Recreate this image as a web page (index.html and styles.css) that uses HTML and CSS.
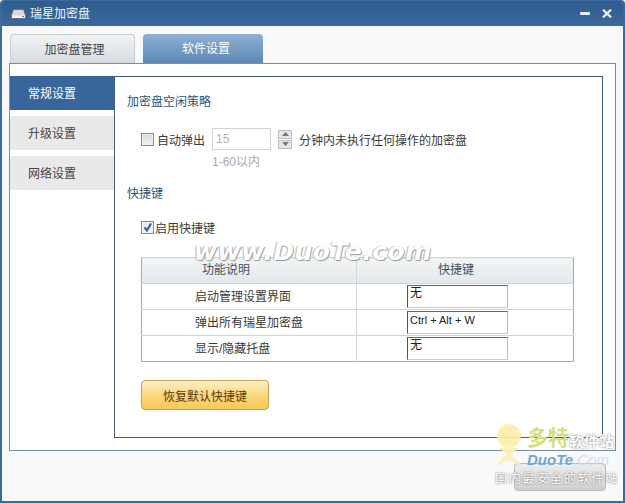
FILE: index.html
```html
<!DOCTYPE html>
<html lang="zh">
<head>
<meta charset="utf-8">
<title>瑞星加密盘</title>
<link rel="stylesheet" href="styles.css">
</head>
<body>
<div class="window">
  <header class="titlebar">
    <svg class="app-icon" width="15" height="10" viewBox="0 0 15 10"><path d="M2.500 .5h10L14.500 6v3.500H.5V6z" fill="#d8d8d8" stroke="#555" stroke-width=".6"/><rect x="1" y="6.500" width="13" height="2.500" fill="#f4f4f4"/><rect x="11" y="7" width="2" height="1" fill="#7a7a7a"/></svg>
    <span class="title">瑞星加密盘</span>
    <span class="win-btns">
      <svg width="10" height="5" viewBox="0 0 10 5"><rect y="1" width="10" height="3" rx="1" fill="#e8edf3"/></svg>
      <svg width="10" height="9" viewBox="0 0 10 9"><path d="M1 .7 9 8.300M9 .7 1 8.300" stroke="#eef2f6" stroke-width="2.200"/></svg>
    </span>
  </header>
  <div class="body">
    <nav class="tabs">
      <div class="tab tab-off">加密盘管理</div>
      <div class="tab tab-on">软件设置</div>
    </nav>
    <section class="panel">
      <aside class="side">
        <div class="side-item side-on">常规设置</div>
        <div class="side-item">升级设置</div>
        <div class="side-item">网络设置</div>
      </aside>
      <main class="content">
        <h2 class="heading">加密盘空闲策略</h2>
        <div class="idle-row">
          <span class="check"></span>
          <span class="check-label">自动弹出</span>
          <span class="num-input">15</span>
          <span class="spin">
            <span class="spin-btn"><svg width="7" height="4" viewBox="0 0 7 4"><path d="M3.500 0 7 4H0z" fill="#777"/></svg></span>
            <span class="spin-btn"><svg width="7" height="4" viewBox="0 0 7 4"><path d="M3.500 4 7 0H0z" fill="#777"/></svg></span>
          </span>
          <span class="idle-text">分钟内未执行任何操作的加密盘</span>
        </div>
        <div class="hint">1-60以内</div>
        <h2 class="heading heading-keys">快捷键</h2>
        <div class="enable-row">
          <span class="check check-on"><svg width="11" height="11" viewBox="0 0 11 11"><path d="M2.500 5.500 5 8.500 9 1.500" fill="none" stroke="#2f5f95" stroke-width="2"/></svg></span>
          <span class="enable-label">启用快捷键</span>
        </div>
        <table class="keys">
          <thead>
            <tr><th class="col-a">功能说明</th><th class="col-b">快捷键</th></tr>
          </thead>
          <tbody>
            <tr><td class="col-a">启动管理设置界面</td><td class="col-b"><span class="key-input">无</span></td></tr>
            <tr><td class="col-a">弹出所有瑞星加密盘</td><td class="col-b"><span class="key-input key-latin">Ctrl + Alt + W</span></td></tr>
            <tr><td class="col-a">显示/隐藏托盘</td><td class="col-b"><span class="key-input">无</span></td></tr>
          </tbody>
        </table>
        <button class="restore" type="button">恢复默认快捷键</button>
      </main>
    </section>
    <div class="footer"><button class="close-btn" type="button"></button></div>
  </div>
  <div class="wm-url">www.DuoTe.com</div>
  <div class="wm-logo">
    <svg class="wm-man" width="34" height="46" viewBox="0 0 34 46"><circle cx="17" cy="12" r="12" fill="#fdeeaa"/><path d="M3 42 15 30 7 24h20l-8 6 12 12-14-6z" fill="#fdf0b4"/></svg>
    <span class="wm-dt">多特</span><span class="wm-soft">软件站</span>
    <span class="wm-en">DuoTe<i class="wm-com">.Com</i></span>
    <span class="wm-cn">国内最安全的软件站</span>
  </div>
</div>
</body>
</html>
```
FILE: styles.css
```css
* { box-sizing: border-box; }
html, body { margin: 0; padding: 0; }
body { width: 625px; height: 503px; overflow: hidden; font-family: "Liberation Sans", "Noto Sans CJK SC", sans-serif; font-size: 12px; color: #3a3a3a; }
.window { position: relative; width: 625px; height: 503px; display: flex; flex-direction: column; background: #f9f9fb; border: 1px solid #3c6a9c; border-width: 1px 2px 2px 2px; border-radius: 4px 4px 0 0; overflow: hidden; }
.titlebar { flex: none; height: 25px; display: flex; align-items: center; padding: 0 11px 0 9px; background: linear-gradient(#2f5b8c, #3b6a9f); color: #f0f4f8; }
.app-icon { margin-top: 1px; }
.title { margin-left: 4px; padding-top: 2px; line-height: 23px; }
.win-btns { margin-left: auto; display: flex; align-items: center; gap: 12px; }
.body { flex: 1; display: flex; flex-direction: column; padding: 8px 7px 0; min-height: 0; }
.tabs { display: flex; gap: 8px; height: 29px; padding-left: 1px; }
.tab { height: 29px; border-radius: 4px 4px 0 0; text-align: center; line-height: 29px; padding-top: 1px; font-size: 12px; }
.tab-off { width: 125px; padding-left: 4px; background: linear-gradient(#f2f4f6, #d6dadf); border: 1px solid #c8cdd2; border-bottom: 0; color: #444; }
.tab-on { width: 120px; padding-left: 6px; background: linear-gradient(#8eb0d3, #5d88b5); color: #fff; }
.panel { flex: none; height: 388px; display: flex; padding: 12px 12px 12px 0; background: #fff; border: 1px solid #748fa3; }
.side { flex: none; width: 104px; display: flex; flex-direction: column; gap: 6px; }
.side-item { height: 34px; line-height: 34px; padding: 1px 0 0 18px; background: #e9e9e9; color: #444; }
.side-on { background: #38669b; color: #fff; }
.content { flex: 1; min-width: 0; padding-left: 12px; border: 1px solid #3d5f7f; background: #fff; }
.heading { margin: 16px 0 0; height: 18px; line-height: 18px; font-size: 12px; font-weight: 400; color: #2f5370; }
.heading-keys { margin-top: 15px; }
.idle-row { display: flex; align-items: center; height: 22px; margin-top: 17px; padding-left: 14px; }
.check { flex: none; width: 13px; height: 13px; display: flex; align-items: center; justify-content: center; background: linear-gradient(#d8d8d8, #f2f2f2); border: 1px solid #8b8b8b; box-shadow: inset 0 0 0 1px #eee; }
.check-on { background: linear-gradient(#dfe6ee, #f5f7fa); border-color: #7d8ea3; }
.check-label { margin-left: 3px; width: 55px; }
.num-input { width: 59px; height: 22px; line-height: 20px; padding-left: 3px; border: 1px solid #d4d4d4; color: #b4b4b4; background: #fff; }
.spin { margin-left: 7px; width: 14px; height: 19px; display: flex; flex-direction: column; gap: 1px; }
.spin-btn { flex: 1; display: flex; align-items: center; justify-content: center; background: #e6e6e6; border: 1px solid #bdbdbd; }
.idle-text { margin-left: 7px; }
.hint { height: 16px; line-height: 16px; margin: 4px 0 0 85px; color: #a9a9a9; }
.enable-row { display: flex; align-items: center; height: 18px; margin-top: 15px; padding-left: 14px; }
.enable-label { margin-left: 1px; }
.keys { width: 433px; margin: 21px 0 0 14px; border-collapse: collapse; table-layout: fixed; border: 1px solid #a9a9a9; }
.keys th, .keys td { padding: 0; border-top: 1px solid #d4d4d4; font-weight: 400; }
.keys th { height: 26px; padding-bottom: 4px; background: linear-gradient(#f3f5f6, #e2e7ea); text-align: left; color: #44525e; }
.keys td { height: 26px; }
.col-a { width: 215px; padding-left: 53px !important; border-right: 1px solid #d8d8d8; }
.keys td.col-a { padding-bottom: 3px; }
.keys th.col-a { padding-left: 60px !important; }
.col-b { padding-left: 50px !important; }
.keys th.col-b { padding-left: 81px !important; }
.keys td.col-b { vertical-align: top; padding-top: 1px !important; }
.key-input { display: block; width: 101px; height: 23px; line-height: 14px; padding: 0 0 0 2px; border: 1px solid #777; border-color: #666 #bbb #ccc #555; background: #fff; color: #222; }
.key-latin { font-size: 11px; padding-top: 1px; }
.restore { display: block; width: 128px; height: 30px; margin: 18px 0 0 14px; padding: 0; border: 1px solid #c9a24a; border-radius: 4px; background: linear-gradient(#fdf0c8, #fbd677 55%, #f9c95a); font: inherit; color: #5e3a0c; }
.footer { flex: 1; display: flex; justify-content: flex-end; align-items: flex-start; padding: 12px 10px 0 0; }
.close-btn { width: 92px; height: 28px; border: 1px solid #bbb; border-radius: 4px; background: linear-gradient(#ececec, #cfcfcf); }
.wm-url { position: absolute; left: 192px; top: 240px; font-family: "DejaVu Sans", sans-serif; font-size: 25px; line-height: 21px; font-style: italic; font-weight: 700; letter-spacing: .5px; color: #fff; text-shadow: 1px 1px 1px #9a9a9a, -1px 0 1px #b5b5b5; white-space: nowrap; }
.wm-logo { position: absolute; left: 489px; top: 423px; width: 134px; height: 78px; }
.wm-man { position: absolute; left: 1px; top: 0; opacity: .9; }
.wm-dt { position: absolute; left: 36px; top: 3px; font-size: 21px; line-height: 22px; font-weight: 700; color: #d5e07a; }
.wm-soft { position: absolute; left: 78px; top: 9px; font-size: 15px; line-height: 18px; font-weight: 700; color: #fff; text-shadow: 0 0 2px #666; white-space: nowrap; }
.wm-en { position: absolute; left: 36px; top: 27px; font-family: "Liberation Sans", sans-serif; font-size: 15px; line-height: 18px; font-weight: 700; font-style: italic; color: #6ea6dd; white-space: nowrap; }
.wm-com { font-weight: 400; color: #cfe0ef; }
.wm-cn { position: absolute; left: 4px; top: 47px; font-size: 12px; line-height: 16px; letter-spacing: 1.8px; color: #fff; text-shadow: 0 0 2px #555; white-space: nowrap; }
```
